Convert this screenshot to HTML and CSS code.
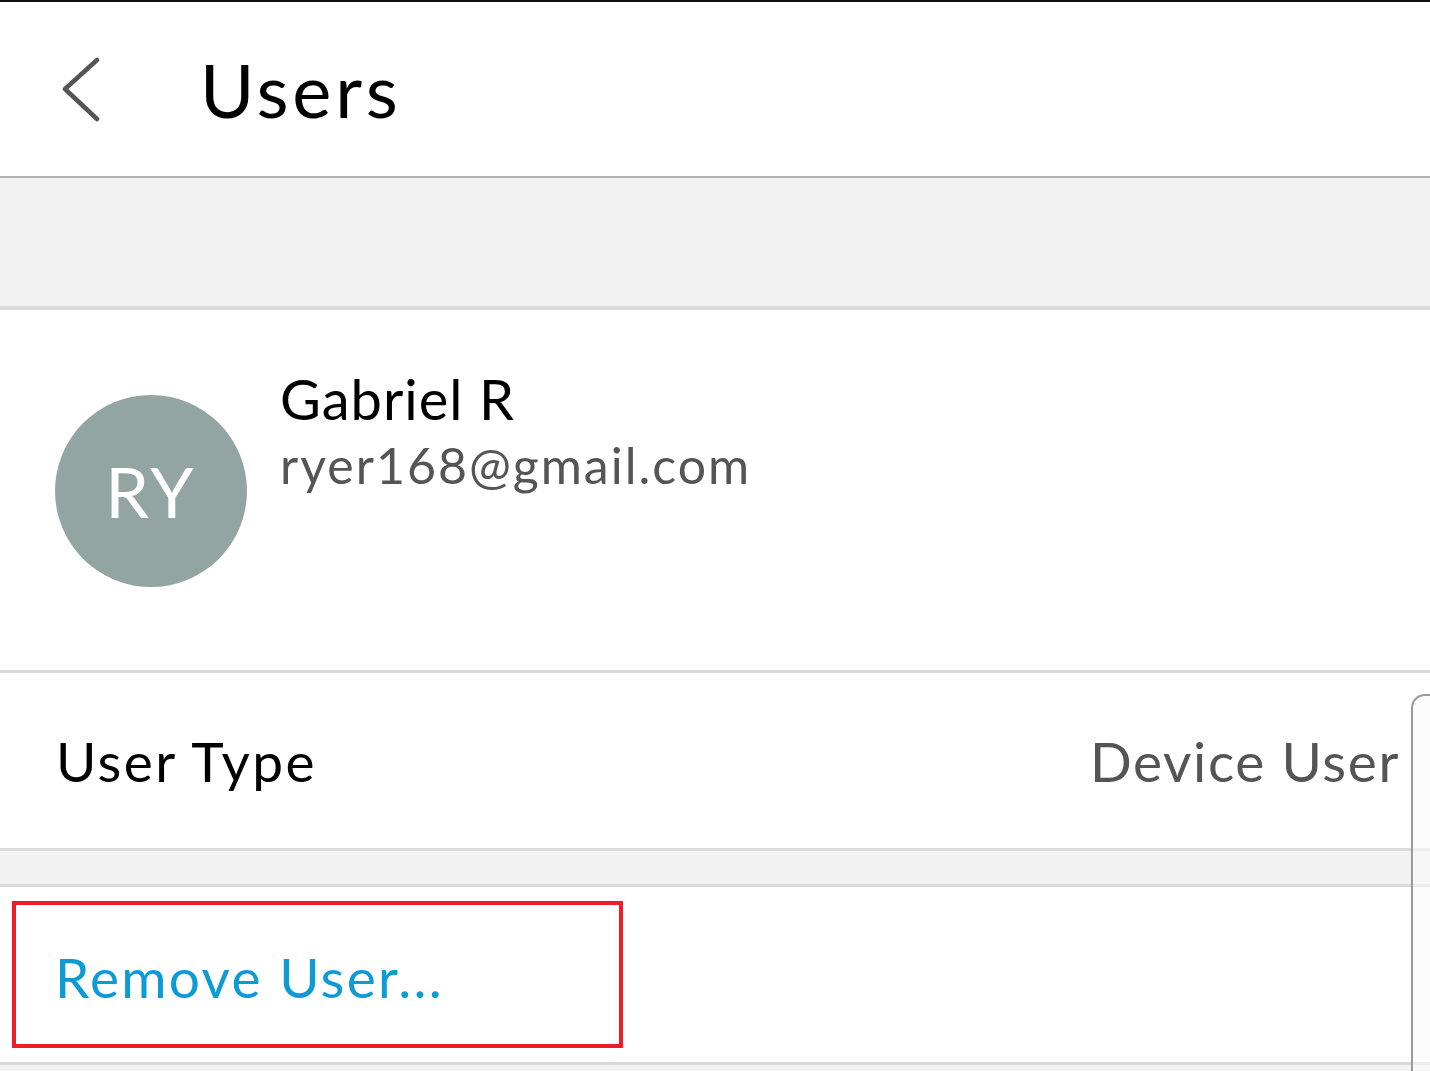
FILE: index.html
```html
<!DOCTYPE html>
<html lang="en">

<head>
    <meta charset="UTF-8">
    <meta name="viewport" content="width=device-width, initial-scale=1.0">
    <title>Users</title>
    <link rel="stylesheet" href="styles.css">
</head>

<body>
    <header class="topbar">
        <svg class="back" width="50" height="80" viewBox="0 0 50 80">
            <polyline points="35,10 3,39 35,69" fill="none" stroke="#555" stroke-width="4.5" stroke-linecap="round" stroke-linejoin="round" />
        </svg>
        <h1 class="title">Users</h1>
    </header>

    <div class="band band-top"></div>

    <section class="profile">
        <div class="avatar">RY</div>
        <div class="who">
            <p class="name">Gabriel R</p>
            <p class="mail">ryer168@gmail.com</p>
        </div>
    </section>

    <section class="row">
        <span class="label">User Type</span>
        <span class="value">Device User</span>
    </section>

    <div class="band band-mid"></div>

    <section class="row row-action">
        <div class="highlight">
            <span class="remove">Remove User...</span>
        </div>
    </section>

    <div class="band band-end"></div>

    <div class="sheet"></div>
</body>

</html>
```

FILE: styles.css
```css
body {
    margin: 0;
    padding: 0;
    background-color: #f2f2f2;
    font-family: Lato, "Noto Sans", sans-serif;
    overflow: hidden;
    height: 1071px;
    position: relative;
}

p {
    margin: 0;
}

/* header */
.topbar {
    height: 174px;
    background-color: #fff;
    border-top: 2px solid #111;
    border-bottom: 2px solid #b3b3b3;
    display: flex;
    align-items: center;
    padding-left: 62px;
    box-sizing: content-box;
}

.back {
    margin-top: 2px;
}

.title {
    margin: 0 0 0 88px;
    font-size: 74px;
    font-weight: 400;
    color: #000;
    letter-spacing: 3.8px;
}

.band {
    background-color: #f2f2f2;
}

.band-top {
    height: 128px;
    border-bottom: 4px solid #dadada;
}

.band-mid {
    height: 33px;
    border-top: 3px solid #dadada;
    border-bottom: 3px solid #dadada;
}

.band-end {
    border-top: 3px solid #dadada;
    height: 20px;
}

/* profile */
.profile {
    height: 360px;
    background-color: #fff;
    border-bottom: 3px solid #dadada;
    display: flex;
    align-items: flex-start;
    padding-left: 55px;
}

.avatar {
    width: 192px;
    height: 192px;
    margin-top: 85px;
    border-radius: 50%;
    background-color: #93a5a3;
    color: #fff;
    font-size: 70px;
    font-weight: 400;
    display: flex;
    align-items: center;
    justify-content: center;
    letter-spacing: 3px;
}

.who {
    margin-left: 33px;
    margin-top: 56px;
}

.name {
    font-size: 56px;
    color: #000;
    letter-spacing: 1px;
    line-height: 66px;
}

.mail {
    font-size: 50px;
    color: #555;
    letter-spacing: 2px;
    line-height: 66px;
}

/* rows */
.row {
    height: 175px;
    background-color: #fff;
    display: flex;
    align-items: center;
    justify-content: space-between;
    padding: 0 30px 0 56px;
}

.label {
    font-size: 55px;
    color: #000;
    letter-spacing: 2.4px;
}

.value {
    font-size: 55px;
    color: #555;
    letter-spacing: 1.6px;
}

.row-action {
    padding: 0 0 0 12px;
    justify-content: flex-start;
}

.highlight {
    width: 564px;
    height: 139px;
    border: 4px solid #ee1c25;
    display: flex;
    align-items: center;
    padding-left: 39px;
    box-sizing: content-box;
}

.remove {
    font-size: 55px;
    color: #0d9bd5;
    letter-spacing: 2.3px;
    margin-top: 4px;
}

/* overlay sheet edge on the right */
.sheet {
    position: absolute;
    left: 1411px;
    top: 694px;
    width: 40px;
    height: 400px;
    border-left: 2px solid #9a9a9a;
    border-top: 2px solid #9a9a9a;
    border-top-left-radius: 14px;
    background-color: rgba(250, 250, 250, 0.6);
}
```
